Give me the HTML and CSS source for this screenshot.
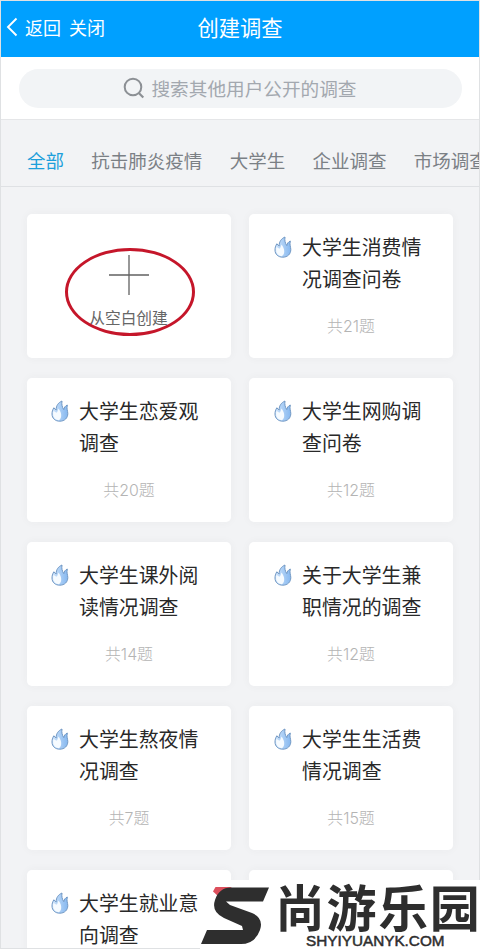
FILE: index.html
```html
<!DOCTYPE html>
<html lang="zh-CN">
<head>
<meta charset="utf-8">
<title>创建调查</title>
<link rel="stylesheet" href="styles.css">
</head>
<body>
<svg class="defs" width="0" height="0" aria-hidden="true">
  <defs>
    <linearGradient id="flame-fill" x1="0" y1="0" x2="1" y2="0">
      <stop offset="0" stop-color="#cfe4fa"/>
      <stop offset="1" stop-color="#86b8f0"/>
    </linearGradient>
    <symbol id="flame" viewBox="0 0 18 22">
      <path d="M11 1C7.500 2.500 5 5.500 5.200 10L2.800 7.800C1.500 10 1 11.800 1 14C1 18.400 4.300 21.200 8.800 21.200C13.600 21.200 16.800 18 16.800 13.600C16.800 10.800 15.400 9.200 16.300 5C14.400 5.800 13.200 7.400 12.800 9.600C11.200 7.200 10.400 4.400 11 1Z" fill="url(#flame-fill)" stroke="#7198c4" stroke-width="1" stroke-linejoin="round"/>
      <path d="M2.600 10.500C3.600 12 4.800 12.600 6 12.600C6.600 11.400 7 9.600 7.600 8.600C9.400 11.200 10.400 13.500 10.200 16C10 18.400 9 19.600 7.600 20.200C3.200 19.600 1 15.600 2.600 10.500Z" fill="#f6fbff"/>
    </symbol>
  </defs>
</svg>
<div class="screen">
  <header class="nav">
    <div class="nav-left">
      <svg class="back" viewBox="0 0 12 20"><path d="M10.500 1.500 2 10l8.500 8.500" fill="none" stroke="#fff" stroke-width="1.900"/></svg>
      <span>返回</span><span>关闭</span>
    </div>
    <h1>创建调查</h1>
  </header>
  <div class="search">
    <div class="search-box">
      <svg class="lens" viewBox="0 0 22 22"><circle cx="10" cy="10" r="8.300" fill="none" stroke="#8c9095" stroke-width="2"/><path d="m15.800 16 4.500 4.500" stroke="#8c9095" stroke-width="2.200"/></svg>
      <span>搜索其他用户公开的调查</span>
    </div>
  </div>
  <nav class="tabs">
    <span class="active">全部</span><span>抗击肺炎疫情</span><span>大学生</span><span>企业调查</span><span>市场调查</span>
  </nav>
  <main class="grid">
    <section class="card create">
      <svg class="plus" viewBox="0 0 40 40"><path d="M20 0v40M0 20h40" stroke="#626262" stroke-width="1.300"/></svg>
      <span>从空白创建</span>
      <div class="ring"></div>
    </section>
    <section class="card"><div class="head"><svg class="flame"><use href="#flame"/></svg><h2>大学生消费情况调查问卷</h2></div><p>共21题</p></section>
    <section class="card"><div class="head"><svg class="flame"><use href="#flame"/></svg><h2>大学生恋爱观调查</h2></div><p>共20题</p></section>
    <section class="card"><div class="head"><svg class="flame"><use href="#flame"/></svg><h2>大学生网购调查问卷</h2></div><p>共12题</p></section>
    <section class="card"><div class="head"><svg class="flame"><use href="#flame"/></svg><h2>大学生课外阅读情况调查</h2></div><p>共14题</p></section>
    <section class="card"><div class="head"><svg class="flame"><use href="#flame"/></svg><h2>关于大学生兼职情况的调查</h2></div><p>共12题</p></section>
    <section class="card"><div class="head"><svg class="flame"><use href="#flame"/></svg><h2>大学生熬夜情况调查</h2></div><p>共7题</p></section>
    <section class="card"><div class="head"><svg class="flame"><use href="#flame"/></svg><h2>大学生生活费情况调查</h2></div><p>共15题</p></section>
    <section class="card"><div class="head"><svg class="flame"><use href="#flame"/></svg><h2>大学生就业意向调查</h2></div></section>
    <section class="card"></section>
  </main>
</div>
<aside class="brand">
  <svg class="brand-mark" viewBox="0 0 70 60">
    <path d="M13 4.500 15.500 0H32L18 9Z" fill="#dc4f5c"/>
    <path d="M31 .500H69L63 14.500H26L30 18L52 26Q64 31 60 43Q55 57 41 57H1L7 43H43L42 39L24 31Q11 25 15 13Q19 .500 31 .500Z" fill="#2e2e2e"/>
  </svg>
  <div class="brand-text">
    <strong>尚游乐园</strong>
    <span>SHYIYUANYK.COM</span>
  </div>
</aside>
</body>
</html>
```
FILE: styles.css
```css
* { box-sizing: border-box; margin: 0; padding: 0; }
body {
  position: relative;
  width: 480px;
  height: 950px;
  overflow: hidden;
  background: #fff;
  font-family: "Noto Sans CJK SC", sans-serif;
}
.defs { position: absolute; }
.screen {
  height: 949px;
  overflow: hidden;
  border: 1px solid #dfe1e3;
  background: #f2f3f5;
}
.nav {
  display: grid;
  grid-template-columns: 1fr auto 1fr;
  align-items: center;
  height: 56px;
  padding: 0 0 4px 5px;
  background: #00a0ff;
  color: #fff;
}
.nav-left { display: flex; align-items: center; font-size: 18px; line-height: 26px; }
.nav-left span { margin-right: 8px; }
.back { width: 12px; height: 20px; margin-right: 7px; }
.nav h1 { margin-right: 5px; font-size: 21.300px; line-height: 30px; font-weight: 400; }
.search { height: 63px; padding: 12px 17px 0 18px; background: #fff; border-bottom: 1px solid #e5e6e8; }
.search-box {
  display: flex;
  align-items: center;
  justify-content: center;
  height: 39px;
  padding: 0 1px 2px 0;
  border-radius: 20px;
  background: #f2f4f6;
  color: #a3a8af;
  font-size: 18.650px;
  line-height: 28px;
}
.lens { width: 22px; height: 22px; margin-right: 6px; }
.tabs {
  display: flex;
  gap: 27.300px;
  height: 67px;
  padding: 26px 0 0 26px;
  border-bottom: 1px solid #dfe1e4;
  color: #7b8085;
  font-size: 18.500px;
  line-height: 28px;
  white-space: nowrap;
  overflow: hidden;
}
.tabs .active { color: #1d9fdb; }
.grid {
  display: grid;
  grid-template-columns: 204px 204px;
  grid-auto-rows: 144px;
  gap: 20px 18px;
  padding: 27px 26px 0;
}
.card {
  position: relative;
  border-radius: 5px;
  background: #fff;
  box-shadow: 0 0 10px rgba(60, 70, 80, .045);
}
.head { display: flex; padding: 17px 0 0 24px; }
.card:nth-child(even) .head { padding-left: 25px; }
.flame { flex: none; width: 18px; height: 22px; margin: 5px 10px 0 0; }
.card h2 { width: 121px; color: #292929; font-size: 19.900px; line-height: 32px; font-weight: 400; }
.card p {
  margin-top: 20px;
  color: #b4b4b4;
  font-family: Inter, "Noto Sans CJK SC", sans-serif;
  font-weight: 300;
  font-size: 15.900px;
  line-height: 24px;
  text-align: center;
}
.create { display: flex; flex-direction: column; align-items: center; padding: 41px 1px 0 0; color: #666; font-size: 15.700px; line-height: 24px; }
.plus { width: 40px; height: 40px; margin-bottom: 11px; }
.ring {
  position: absolute;
  left: 38px;
  top: 34px;
  width: 130px;
  height: 88px;
  border: 3px solid #c5162a;
  border-radius: 50%;
}
.brand {
  position: absolute;
  left: 200px;
  top: 880px;
  display: flex;
  width: 280px;
  height: 70px;
  background: #fff;
}
.brand-mark { flex: none; width: 70px; height: 60px; margin-top: 7px; }
.brand-text { flex: none; display: flex; flex-direction: column; width: 210px; padding-left: 5px; color: #2e2e2e; }
.brand-text strong { height: 53px; font-size: 50px; line-height: 50px; letter-spacing: 1.600px; font-weight: 700; white-space: nowrap; }
.brand-text span { margin-left: 31px; font: 15.300px/16px "Liberation Sans", sans-serif; -webkit-text-stroke: .5px #2e2e2e; }
```
